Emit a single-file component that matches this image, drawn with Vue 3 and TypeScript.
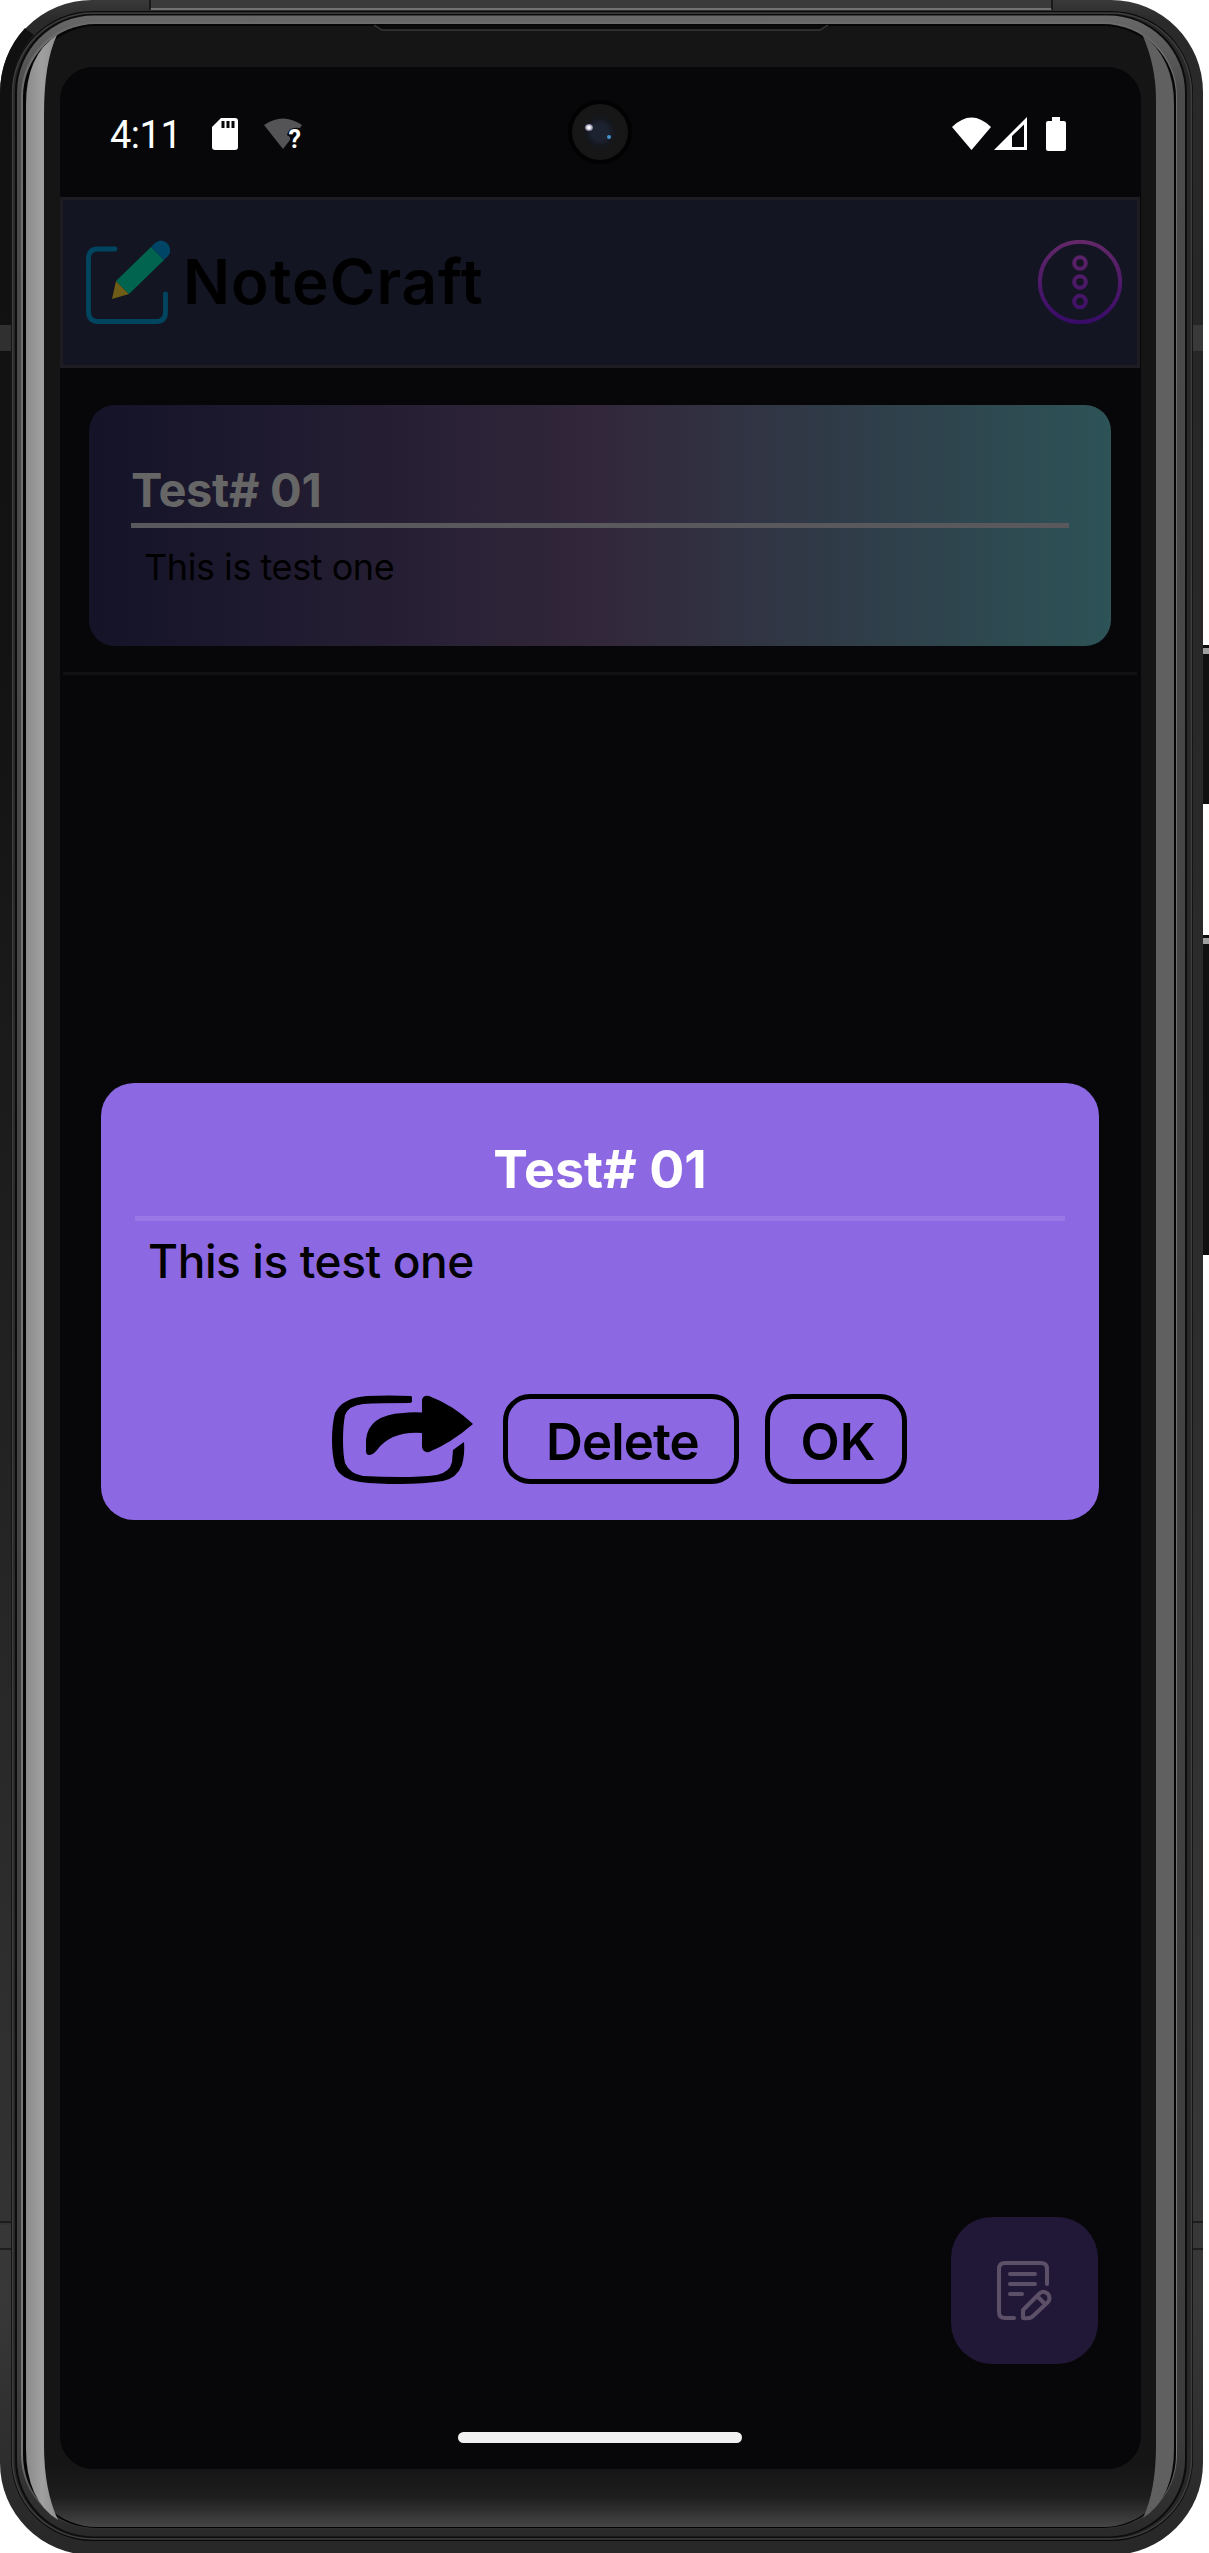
<script setup lang="ts">
import { ref } from 'vue'

interface Note {
  title: string
  body: string
}

const clock = ref('4:11')
const appName = 'NoteCraft'
const notes = ref<Note[]>([{ title: 'Test# 01', body: 'This is test one' }])
const opened = ref<Note | null>(notes.value[0])
</script>

<template>
  <div class="device">
    <svg class="frame" width="1209" height="2553" viewBox="0 0 1209 2553" aria-hidden="true">
      <defs>
        <linearGradient id="shell" x1="0" y1="0" x2="0" y2="1">
          <stop offset="0" stop-color="#393939" />
          <stop offset="0.008" stop-color="#2a2a2a" />
          <stop offset="0.12" stop-color="#262626" />
          <stop offset="0.5" stop-color="#2c2c2c" />
          <stop offset="0.9" stop-color="#383838" />
          <stop offset="1" stop-color="#272727" />
        </linearGradient>
        <linearGradient id="leftSide" x1="0" y1="0" x2="0" y2="1">
          <stop offset="0" stop-color="#101010" />
          <stop offset="0.3" stop-color="#131313" />
          <stop offset="1" stop-color="#333333" />
        </linearGradient>
        <linearGradient id="rim" x1="0" y1="0" x2="0" y2="1">
          <stop offset="0" stop-color="#686868" />
          <stop offset="0.03" stop-color="#4b4b4b" />
          <stop offset="0.96" stop-color="#3c3c3c" />
          <stop offset="1" stop-color="#292929" />
        </linearGradient>
        <linearGradient id="hairline" x1="0" y1="0" x2="0" y2="1">
          <stop offset="0" stop-color="#6c6c6c" />
          <stop offset="0.97" stop-color="#777777" />
          <stop offset="1" stop-color="#2e2e2e" />
        </linearGradient>
        <linearGradient id="glass" gradientUnits="userSpaceOnUse" x1="0" y1="2465" x2="0" y2="2528">
          <stop offset="0" stop-color="#151515" />
          <stop offset="0.5" stop-color="#1d1d1d" />
          <stop offset="1" stop-color="#474747" />
        </linearGradient>
        <linearGradient id="stripL" x1="0" y1="0" x2="1" y2="0">
          <stop offset="0" stop-color="#8a8a8a" />
          <stop offset="0.5" stop-color="#a0a0a0" />
          <stop offset="1" stop-color="#8e8e8e" />
        </linearGradient>
      </defs>

      <rect x="1201" y="645" width="12" height="159" fill="#101010" />
      <rect x="1203" y="648" width="6" height="6" fill="#a0a0a0" />
      <rect x="1201" y="935" width="12" height="320" fill="#101010" />
      <rect x="1203" y="938" width="6" height="6" fill="#a0a0a0" />

      <rect x="0" y="0" width="1203" height="2555" rx="92" fill="url(#shell)" />
      <path d="M0 95V2225H11V95Q11 60 34 35L25 28Q0 55 0 95Z" fill="url(#leftSide)" />
      <path d="M150 0H1052V10H150Z" fill="#3a3a3a" />
      <path d="M150 9H1052" stroke="#858585" stroke-width="1.6" />
      <path d="M150 0V10M1052 0V10" stroke="#101010" stroke-width="1.5" />
      <rect x="0" y="325" width="11" height="26" fill="#303030" />
      <rect x="1189" y="325" width="14" height="26" fill="#393939" />
      <path d="M0 2222H11M0 2249H11M1189 2222H1203M1189 2249H1203" stroke="#161616" stroke-width="1.5" />

      <rect x="11" y="11" width="1182" height="2530" rx="82" fill="#090909" />
      <rect x="12.5" y="13" width="1179" height="2526" rx="80" fill="#282828" stroke="#3e3e3e" stroke-width="1.5" />
      <rect x="15" y="14" width="1172" height="2524" rx="78" fill="#0c0c0c" />
      <rect x="17" y="15.5" width="1168" height="2521" rx="77" fill="url(#rim)" />
      <rect x="21" y="22" width="1156" height="2507" rx="74" fill="url(#hairline)" />
      <rect x="23" y="24" width="1153" height="2504" rx="73" fill="#050505" />
      <rect x="26" y="26" width="1148" height="2501" rx="71" fill="url(#glass)" />
      <path d="M374 25L382 30H820L828 25" fill="#0a0a0a" stroke="#383838" stroke-width="1.4" />

      <path d="M57 35Q26 55 26 105V2448Q26 2500 58 2520Q44 2490 44 2445V115Q44 62 57 35Z" fill="url(#stripL)" />
      <path d="M1142 34Q1174 58 1174 105V2448Q1174 2498 1143 2518Q1156 2490 1156 2445V100Q1156 65 1142 34Z" fill="#606060" />
    </svg>

    <main class="screen">
      <div class="status">
        <span class="clock">{{ clock }}</span>
        <svg class="sd" width="26" height="32" viewBox="0 0 26 32">
          <path d="M9 0H23Q26 0 26 3V29Q26 32 23 32H3Q0 32 0 29V9Z" fill="#fff" />
          <path d="M11 3V10M16 3V10M21 3V10" stroke="#070709" stroke-width="3" />
        </svg>
        <svg class="wifi-unknown" width="46" height="32" viewBox="0 0 46 32">
          <path d="M0 7Q19-6 38 7L36 10Q25 8 23 17L26 19V22L19 31Z" fill="#545456" />
          <text x="24.500" y="30" font-family="Roboto, sans-serif" font-size="25" font-weight="700" fill="#fff">?</text>
        </svg>
        <span class="camera"><i class="glint"></i><i class="dot"></i></span>
        <svg class="signals" width="115" height="34" viewBox="0 0 115 34">
          <path d="M0 10Q19.500-9 39 10L19.500 33Z" fill="#fff" />
          <path d="M42 33L75 0V33Z" fill="#fff" />
          <path d="M60 19L72 7.500V30H60Z" fill="#070709" />
          <path d="M100 0H108V4H112Q114 4 114 6V32Q114 34 112 34H96Q94 34 94 32V6Q94 4 96 4H100Z" fill="#fff" />
        </svg>
      </div>

      <header class="bar">
        <svg class="logo" width="84" height="84" viewBox="0 0 84 84">
          <path d="M29 9H12Q2.500 9 2.500 19V71Q2.500 81.500 12 81.500H70Q79.500 81.500 79.500 72V54" fill="none" stroke="#00455f" stroke-width="4.800" stroke-linecap="round" />
          <path d="M26 59L30 41L43 54Z" fill="#6e5c17" />
          <path d="M30 41L65 7L78 20L43 54Z" fill="#00644f" />
          <path d="M65 7L69 3Q75-2 81 3Q87 10 82 16L78 20Z" fill="#004565" />
        </svg>
        <h1>{{ appName }}</h1>
        <svg class="menu" width="84" height="84" viewBox="0 0 84 84">
          <defs>
            <linearGradient id="dots" gradientUnits="userSpaceOnUse" x1="0" y1="0" x2="0" y2="84">
              <stop offset="0" stop-color="#632867" />
              <stop offset="1" stop-color="#390b69" />
            </linearGradient>
          </defs>
          <g fill="none" stroke="url(#dots)" stroke-width="4">
            <circle cx="42" cy="42" r="40.200" />
            <circle cx="42" cy="23" r="5.800" />
            <circle cx="42" cy="42" r="5.800" />
            <circle cx="42" cy="61.500" r="5.800" />
          </g>
        </svg>
      </header>

      <section class="list">
        <article v-for="note in notes" :key="note.title" class="note">
          <h2>{{ note.title }}</h2>
          <p>{{ note.body }}</p>
        </article>
      </section>

      <section v-if="opened" class="dialog" role="dialog">
        <h2>{{ opened.title }}</h2>
        <p>{{ opened.body }}</p>
        <div class="actions">
          <svg class="share" width="144" height="90" viewBox="0 0 144 90">
            <path d="M80 2Q81 2 81 4V8L79 9Q48 9 32 10Q17 12 14 21Q12 32 12 46Q12 60 14 69Q19 80 32 82Q50 83 69 83Q90 83 106 81Q119 78 121 68L122 56L133 48Q134 60 131 71Q126 84 112 87Q92 90 69 90Q46 90 29 88Q9 85 4 72Q1 60 1 46Q1 31 4 19Q11 4 36 2Q58 1 80 2Z" />
            <path d="M91 6Q92 1 98 2Q122 11 142 30Q120 49 98 58Q92 59 91 53V39Q60 37 46 56Q42 61 38 61Q35 61 35 57V46Q37 21 72 19Q80 18 91 18.500Z" />
          </svg>
          <button class="delete" type="button">Delete</button>
          <button class="ok" type="button">OK</button>
        </div>
      </section>

      <button class="fab" type="button" aria-label="New note">
        <svg width="56" height="62" viewBox="0 0 56 62" fill="none" stroke="#5b5067" stroke-width="4" stroke-linecap="round" stroke-linejoin="round">
          <path d="M17 58H8Q2 58 2 52V9Q2 3 8 3H44Q50 3 50 9V24M13 14H38M13 24H38M13 34H25" />
          <path d="M26 58V50L43 33Q47 30 51 34Q54 38 51 42L35 57Q32 59 26 58ZM40 36L48 44" />
        </svg>
      </button>
      <div class="home"></div>
    </main>
  </div>
</template>

<style>
body {
  margin: 0;
  background: #fff;
}
</style>

<style scoped>
.device {
  position: relative;
  box-sizing: border-box;
  width: 1209px;
  height: 2553px;
  padding: 67px 68px 84px 60px;
  overflow: hidden;
  font-family: Inter, 'Liberation Sans', sans-serif;
}
.frame {
  position: absolute;
  inset: 0;
}
h1,
h2,
p {
  margin: 0;
  white-space: nowrap;
}
button {
  font: inherit;
  padding: 0;
  box-sizing: border-box;
}
.screen {
  position: relative;
  display: flex;
  flex-direction: column;
  height: 2402px;
  border-radius: 33px;
  background: #070709;
  overflow: hidden;
}
.status {
  position: relative;
  display: flex;
  align-items: center;
  height: 130px;
  box-sizing: border-box;
  padding: 3px 74px 0 50px;
}
.clock {
  width: 102px;
  font: 400 38px/44px Roboto, sans-serif;
  letter-spacing: -0.5px;
  color: #fff;
  padding-top: 3px;
}
.wifi-unknown {
  margin-left: 26px;
}
.signals {
  margin-left: auto;
}
.camera {
  position: absolute;
  left: 508px;
  top: 33px;
  width: 56px;
  height: 56px;
  border: 4px solid #020202;
  border-radius: 50%;
  background: radial-gradient(circle at 50% 50%, #1c2230 0 8px, #15171d 14px, #171717 18px, #151515);
}
.glint,
.dot {
  position: absolute;
  border-radius: 50%;
}
.glint {
  left: 13px;
  top: 20px;
  width: 8px;
  height: 7px;
  background: radial-gradient(#fff 20%, #8d8ba8 60%, #3a3a50);
}
.dot {
  left: 35px;
  top: 31px;
  width: 4px;
  height: 4px;
  background: #4594cf;
}
.bar {
  display: flex;
  align-items: center;
  box-sizing: border-box;
  width: 1080px;
  height: 171px;
  padding: 0 15px 2px 23px;
  border: 3px solid #1c1c22;
  background: #141522;
}
.bar h1 {
  margin-left: 13px;
  font-size: 62px;
  font-weight: 600;
  line-height: 80px;
  color: #000;
  letter-spacing: 1px;
}
.menu {
  margin-left: auto;
}
.list {
  margin: 0 4px 0 3px;
  padding: 37px 26px 26px;
  border-bottom: 3px solid #121214;
}
.note {
  box-sizing: border-box;
  height: 241px;
  padding: 57px 42px 0;
  border-radius: 26px;
  background: linear-gradient(90deg, #141328, #32273b 50%, #2d5357);
}
.note h2 {
  height: 61px;
  font-size: 47px;
  line-height: 56px;
  font-weight: 700;
  letter-spacing: -0.3px;
  color: #666;
  border-bottom: 5px solid #59585d;
}
.note p {
  padding: 15px 0 0 13px;
  font-size: 36px;
  line-height: 48px;
  letter-spacing: -0.45px;
  color: #000;
}
.dialog {
  box-sizing: border-box;
  width: 998px;
  height: 437px;
  margin: 408px 0 0 41px;
  padding: 55px 34px 0;
  border-radius: 33px;
  background: #8c68e3;
}
.dialog h2 {
  height: 78px;
  font-size: 52px;
  line-height: 64px;
  font-weight: 650;
  text-align: center;
  color: #fff;
  border-bottom: 5px solid #9a79e6;
}
.dialog p {
  padding: 12px 0 0 13px;
  font-size: 46px;
  line-height: 56px;
  font-weight: 450;
  letter-spacing: -0.4px;
  color: #000;
}
.actions {
  display: flex;
  margin: 105px 0 0 196px;
}
.actions button {
  height: 90px;
  border: 5px solid #000;
  border-radius: 27px;
  background: none;
  font-size: 51px;
  line-height: 80px;
  font-weight: 600;
  color: #000;
}
.actions .delete {
  width: 236px;
  margin-left: 28px;
  padding: 3px 0 0 3px;
  letter-spacing: -0.9px;
}
.actions .ok {
  width: 142px;
  margin-left: 26px;
  padding: 3px 0 0 4px;
}
.fab {
  display: flex;
  justify-content: center;
  align-items: center;
  align-self: flex-end;
  width: 147px;
  height: 147px;
  margin: 697px 43px 0 0;
  border: 0;
  border-radius: 41px;
  background: #211736;
}
.home {
  width: 284px;
  height: 11px;
  margin: 68px 0 0 398px;
  border-radius: 6px;
  background: #f1f1f1;
}
</style>
